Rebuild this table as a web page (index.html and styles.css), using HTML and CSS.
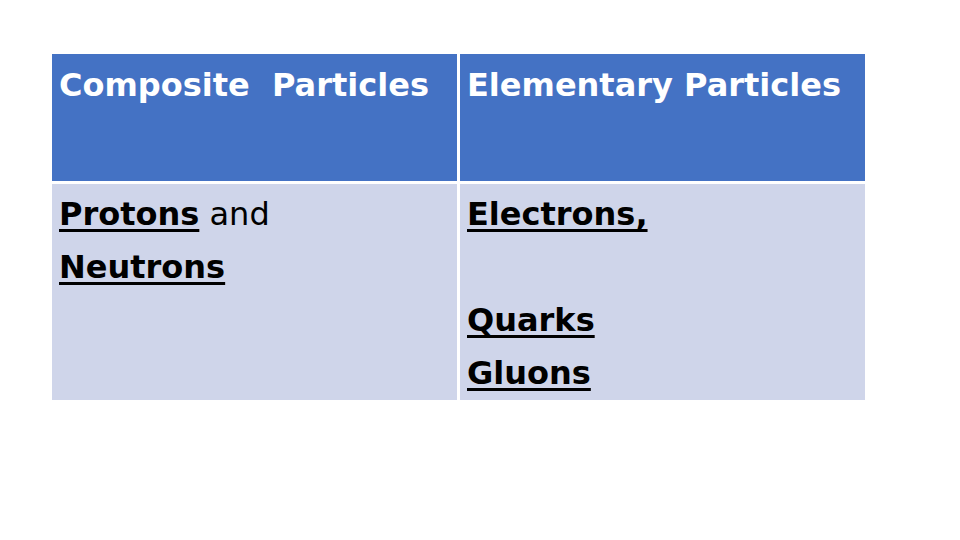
FILE: index.html
```html
<!DOCTYPE html>
<html lang="en">
<head>
<meta charset="utf-8">
<title>Particles</title>
<link rel="stylesheet" href="styles.css">
</head>
<body>
<main class="slide">
  <table class="particles">
    <thead>
      <tr>
        <th class="head-cell">Composite&nbsp; Particles</th>
        <th class="head-cell">Elementary Particles</th>
      </tr>
    </thead>
    <tbody>
      <tr>
        <td class="body-cell"><a class="term" href="#">Protons</a> and<br><a class="term" href="#">Neutrons</a></td>
        <td class="body-cell"><a class="term" href="#">Electrons,</a><br><br><a class="term" href="#">Quarks</a><br><a class="term" href="#">Gluons</a></td>
      </tr>
    </tbody>
  </table>
</main>
</body>
</html>
```

FILE: styles.css
```css
html, body {
  margin: 0;
  padding: 0;
  background: #ffffff;
}

.slide {
  width: 960px;
  height: 540px;
  box-sizing: border-box;
  padding: 51px 0 0 49px;
  font-family: "DejaVu Sans", "Liberation Sans", sans-serif;
}

.particles {
  border-collapse: separate;
  border-spacing: 3px;
  table-layout: fixed;
}

.head-cell {
  width: 405px;
  height: 127px;
  box-sizing: border-box;
  padding: 12px 7px 0 7px;
  background: #4472c4;
  color: #ffffff;
  font-size: 32px;
  font-weight: bold;
  line-height: 1.2;
  text-align: left;
  vertical-align: top;
  white-space: nowrap;
}

.body-cell {
  width: 405px;
  height: 216px;
  box-sizing: border-box;
  padding: 4px 7px 0 7px;
  background: #cfd5ea;
  color: #000000;
  font-size: 32px;
  line-height: 53px;
  vertical-align: top;
}

.term {
  color: #000000;
  font-weight: bold;
  text-decoration: underline;
  text-decoration-thickness: 3px;
  text-underline-offset: 4px;
  text-decoration-skip-ink: none;
}
```
